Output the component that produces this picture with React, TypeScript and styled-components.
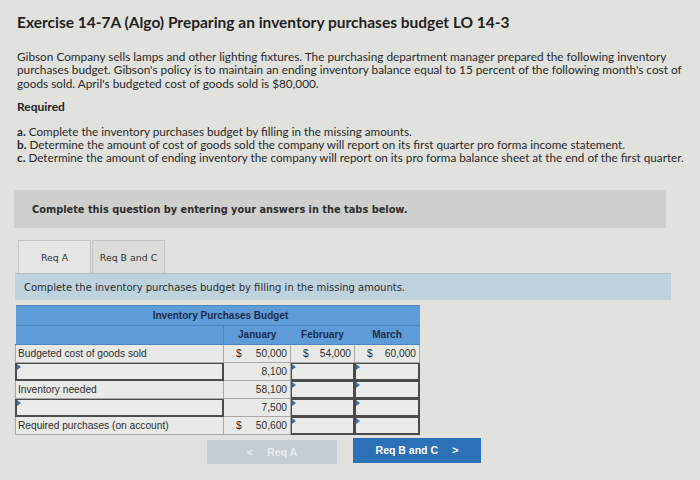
import React from "react";
import styled, { createGlobalStyle } from "styled-components";

const Global = createGlobalStyle`
  html, body { margin: 0; padding: 0; }
  body {
    background: #e1e1de;
    font-family: Lato, "Open Sans", sans-serif;
    color: #262626;
    width: 700px;
    height: 480px;
    overflow: hidden;
  }
`;

const Page = styled.div`
  display: flex;
  flex-direction: column;
  padding: 13px 0 0 14px;
`;

const Title = styled.h1`
  margin: 0 0 0 3px;
  font: 700 15.5px/18px Lato, sans-serif;
  color: #1f1f1f;
  white-space: nowrap;
`;

const Para = styled.p`
  margin: 19px 0 0 3px;
  font: 400 11.8px/13.4px Lato, sans-serif;
  color: #2a2a2a;
  white-space: nowrap;
`;

const Required = styled.div`
  margin: 10px 0 0 3px;
  font: 700 12px/14px Lato, sans-serif;
  color: #242424;
`;

const List = styled.div`
  margin: 11px 0 0 3px;
  font: 400 11.7px/12.8px Lato, sans-serif;
  color: #2a2a2a;
  white-space: nowrap;
`;

const Letter = styled.b`
  font-weight: 700;
`;

const Banner = styled.div`
  margin-top: 26px;
  width: 652px;
  height: 38px;
  box-sizing: border-box;
  background: #cfd0cd;
  display: flex;
  align-items: center;
  padding: 2px 0 0 18px;
  font: 700 9.8px "DejaVu Sans", Verdana, sans-serif;
  color: #2c2c2c;
`;

const Tabs = styled.div`
  display: flex;
  gap: 1px;
  margin: 12px 0 0 4px;
`;

const Tab = styled.div<{ $active?: boolean }>`
  width: 73px;
  height: ${(p) => (p.$active ? 36 : 34)}px;
  box-sizing: border-box;
  border: 1px solid #c2c2c0;
  border-bottom: none;
  background: ${(p) => (p.$active ? "#e6e6e4" : "#dcdcda")};
  display: flex;
  align-items: center;
  justify-content: center;
  padding-bottom: ${(p) => (p.$active ? 2 : 0)}px;
  font: 400 9.4px "DejaVu Sans", Verdana, sans-serif;
  color: #333;
`;

const Instruction = styled.div`
  width: 656px;
  height: 27px;
  margin-top: -3px;
  margin-left: 1px;
  box-sizing: border-box;
  background: #bfd3df;
  border-top: 1px solid #aebfc9;
  display: flex;
  align-items: center;
  padding: 2px 0 0 9px;
  font: 400 10px "DejaVu Sans", Verdana, sans-serif;
  color: #2b2b2b;
`;

const Table = styled.table`
  margin: 5px 0 0 1px;
  border-collapse: collapse;
  table-layout: fixed;
  width: 404px;
  font-family: "Liberation Sans", Arial, sans-serif;
  font-size: 10.2px;
  color: #2e2e2e;
`;

const HeadCell = styled.th<{ $divider?: boolean }>`
  background: #5e9cd7;
  height: 18px;
  padding: 0;
  font: 700 10px "Liberation Sans", Arial, sans-serif;
  color: #1b2c4c;
  text-align: center;
  border-top: 1px solid #4f86bd;
  border-bottom: 1px solid #4f86bd;
  border-right: ${(p) => (p.$divider ? "1px solid #4f86bd" : "none")};
  vertical-align: middle;
`;

const TitleCell = styled(HeadCell)`
  height: 19px;
  padding-left: 6px;
`;

const Cell = styled.td`
  height: 17px;
  padding: 0;
  background: #e9e9e7;
  border: 1px solid #a7a7a5;
  vertical-align: middle;
`;

const LabelText = styled.div`
  padding-left: 2px;
  padding-top: 1px;
  white-space: nowrap;
`;

const Amount = styled.div`
  display: flex;
  justify-content: space-between;
  padding: 1px 3px 0 12px;
`;

const AmountRight = styled.div`
  text-align: right;
  padding: 1px 3px 0 0;
`;

const InputBox = styled.div`
  position: relative;
  height: 17px;
  box-sizing: border-box;
  border: 1.5px solid #4b4b4b;
  background: #ebebe9;
  &::before {
    content: "";
    position: absolute;
    left: 0;
    top: 0;
    border-top: 3px solid transparent;
    border-bottom: 3px solid transparent;
    border-left: 4px solid #3f6fa8;
  }
`;

const InputCell = styled.td`
  padding: 0;
  border: 1px solid #4b4b4b;
  background: #ebebe9;
  height: 17px;
`;

const Buttons = styled.div`
  display: flex;
  align-items: flex-start;
  gap: 16px;
  margin: 4px 0 0 193px;
`;

const NavButton = styled.div<{ $primary?: boolean }>`
  width: ${(p) => (p.$primary ? 128 : 130)}px;
  height: ${(p) => (p.$primary ? 25 : 24)}px;
  margin-top: ${(p) => (p.$primary ? -1 : 1)}px;
  background: ${(p) => (p.$primary ? "#2c70b6" : "#c4ccd4")};
  color: ${(p) => (p.$primary ? "#ffffff" : "#e9edf1")};
  display: flex;
  align-items: center;
  justify-content: center;
  gap: 14px;
  font: 700 10.5px "Liberation Sans", Arial, sans-serif;
`;

const Chevron = styled.span`
  font-weight: 700;
  font-size: 11px;
`;

type Row = {
  label?: string;
  jan: string;
  janDollar?: boolean;
  feb?: string;
  mar?: string;
};

const rows: Row[] = [
  { label: "Budgeted cost of goods sold", jan: "50,000", janDollar: true, feb: "54,000", mar: "60,000" },
  { jan: "8,100" },
  { label: "Inventory needed", jan: "58,100" },
  { jan: "7,500" },
  { label: "Required purchases (on account)", jan: "50,600", janDollar: true },
];

export default function App() {
  return (
    <>
      <Global />
      <Page>
        <Title>Exercise 14-7A (Algo) Preparing an inventory purchases budget LO 14-3</Title>
        <Para>
          Gibson Company sells lamps and other lighting fixtures. The purchasing department manager prepared the following inventory
          <br />
          purchases budget. Gibson's policy is to maintain an ending inventory balance equal to 15 percent of the following month's cost of
          <br />
          goods sold. April's budgeted cost of goods sold is $80,000.
        </Para>
        <Required>Required</Required>
        <List>
          <Letter>a.</Letter> Complete the inventory purchases budget by filling in the missing amounts.
          <br />
          <Letter>b.</Letter> Determine the amount of cost of goods sold the company will report on its first quarter pro forma income statement.
          <br />
          <Letter>c.</Letter> Determine the amount of ending inventory the company will report on its pro forma balance sheet at the end of the first quarter.
        </List>
        <Banner>Complete this question by entering your answers in the tabs below.</Banner>
        <Tabs>
          <Tab $active>Req A</Tab>
          <Tab>Req B and C</Tab>
        </Tabs>
        <Instruction>Complete the inventory purchases budget by filling in the missing amounts.</Instruction>
        <Table>
          <colgroup>
            <col style={{ width: 208 }} />
            <col style={{ width: 67 }} />
            <col style={{ width: 64 }} />
            <col style={{ width: 65 }} />
          </colgroup>
          <thead>
            <tr>
              <TitleCell colSpan={4}>Inventory Purchases Budget</TitleCell>
            </tr>
            <tr>
              <HeadCell $divider />
              <HeadCell>January</HeadCell>
              <HeadCell>February</HeadCell>
              <HeadCell>March</HeadCell>
            </tr>
          </thead>
          <tbody>
            {rows.map((r, i) => (
              <tr key={i}>
                {r.label ? (
                  <Cell>
                    <LabelText>{r.label}</LabelText>
                  </Cell>
                ) : (
                  <InputCell>
                    <InputBox />
                  </InputCell>
                )}
                <Cell>
                  {r.janDollar ? (
                    <Amount>
                      <span>$</span>
                      <span>{r.jan}</span>
                    </Amount>
                  ) : (
                    <AmountRight>{r.jan}</AmountRight>
                  )}
                </Cell>
                {r.feb ? (
                  <Cell>
                    <Amount>
                      <span>$</span>
                      <span>{r.feb}</span>
                    </Amount>
                  </Cell>
                ) : (
                  <InputCell>
                    <InputBox />
                  </InputCell>
                )}
                {r.mar ? (
                  <Cell>
                    <Amount>
                      <span>$</span>
                      <span>{r.mar}</span>
                    </Amount>
                  </Cell>
                ) : (
                  <InputCell>
                    <InputBox />
                  </InputCell>
                )}
              </tr>
            ))}
          </tbody>
        </Table>
        <Buttons>
          <NavButton>
            <Chevron>&lt;</Chevron>
            <span>Req A</span>
          </NavButton>
          <NavButton $primary>
            <span>Req B and C</span>
            <Chevron>&gt;</Chevron>
          </NavButton>
        </Buttons>
      </Page>
    </>
  );
}
